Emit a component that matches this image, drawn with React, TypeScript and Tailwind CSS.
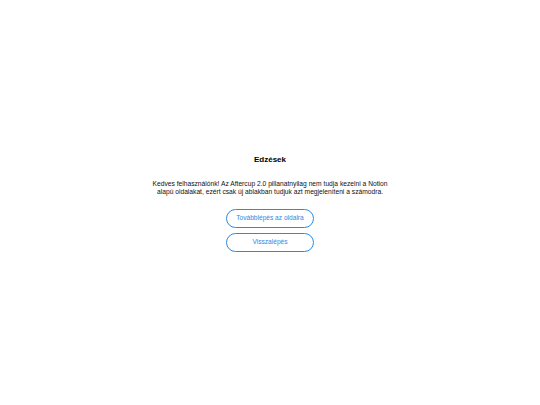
import React from 'react';

const App: React.FC = () => {
  return (
    <div className="w-full h-screen bg-white flex flex-col items-center justify-center pt-[3px] font-['Liberation_Sans',Arial,sans-serif]">
      <h1 className="text-[8px] font-bold text-black leading-none">Edzések</h1>
      <p className="mt-[16px] w-[240px] text-center text-[6.7px] leading-[8px] text-[#111]">
        Kedves felhasználónk! Az Aftercup 2.0 pillanatnyilag nem tudja kezelni a Notion alapú oldalakat, ezért csak új ablakban tudjuk azt megjeleníteni a számodra.
      </p>
      <div className="mt-[13px] flex flex-col gap-[5px]">
        <button className="w-[88px] h-[19px] rounded-full border border-[#2b8ae5] text-[#2b8ae5] text-[6.6px] leading-none">
          Továbblépés az oldalra
        </button>
        <button className="w-[88px] h-[19px] rounded-full border border-[#2b8ae5] text-[#2b8ae5] text-[6.6px] leading-none">
          Visszalépés
        </button>
      </div>
    </div>
  );
};

export default App;
